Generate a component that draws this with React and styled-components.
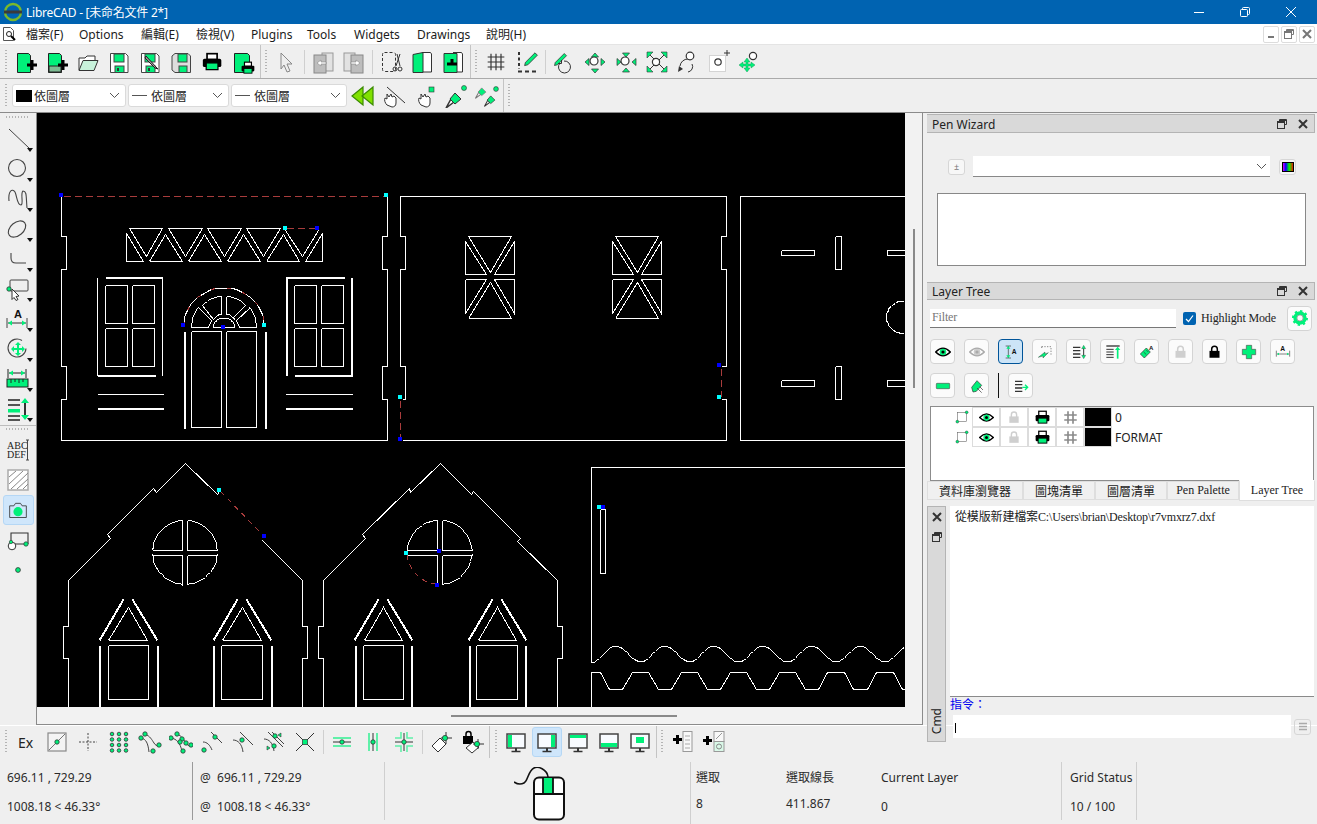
import React from 'react';
import styled, { createGlobalStyle } from 'styled-components';

const G = '#00f07a';
const INK = '#222';
const SANS = '"Noto Sans", "Noto Sans CJK TC", sans-serif';
const SERIF = '"Liberation Serif", "Noto Sans CJK TC", serif';

const Global = createGlobalStyle`
  html, body { margin: 0; padding: 0; background: #efefef; overflow: hidden; }
  * { box-sizing: border-box; }
  body { font-family: ${SANS}; font-size: 12px; color: ${INK}; }
`;

const Win = styled.div`
  width: 1317px;
  height: 824px;
  display: flex;
  flex-direction: column;
  background: #efefef;
  overflow: hidden;
`;

/* title + menu */
const TitleBar = styled.div`
  height: 24px;
  flex: none;
  background: #0063b1;
  color: #fff;
  display: flex;
  align-items: center;
  padding: 0 3px;
  font-size: 12px;
`;
const TitleText = styled.span`
  margin-left: 3px;
  letter-spacing: -0.25px;
`;
const Caption = styled.div`
  margin-left: auto;
  display: flex;
`;
const CaptionBtn = styled.div`
  width: 46px;
  height: 24px;
  display: flex;
  align-items: center;
  justify-content: center;
`;
const MenuBar = styled.div`
  height: 21px;
  flex: none;
  background: #fff;
  border-bottom: 1px solid #e4e4e4;
  display: flex;
  align-items: center;
  padding-left: 3px;
`;
const MenuItem = styled.div`
  width: ${p => p.$w}px;
  flex: none;
  font-size: 12px;
  white-space: nowrap;
  color: #1c1c1c;
`;
const MdiBtns = styled.div`
  margin-left: auto;
  margin-right: 2px;
  display: flex;
  gap: 2px;
`;
const MdiBtn = styled.div`
  width: 16px;
  height: 17px;
  border: 1px solid #dcdcdc;
  border-radius: 2px;
  display: flex;
  align-items: center;
  justify-content: center;
`;

/* toolbars */
const ToolRow = styled.div`
  height: 34px;
  flex: none;
  display: flex;
  border-bottom: 1px solid ${p => p.$line || '#aaa'};
`;
const Group = styled.div`
  display: flex;
  align-items: center;
  height: 100%;
  padding-left: ${p => p.$pl || 0}px;
  padding-right: ${p => p.$pr || 0}px;
  border-right: ${p => (p.$end ? '1px solid #c4c4c4' : 'none')};
`;
const EndLine = styled.div`
  width: ${p => p.$w}px;
  height: 100%;
  flex: none;
  border-right: 1px solid #c4c4c4;
  margin-right: ${p => p.$mr || 0}px;
`;
const Grip = styled.div`
  width: 9px;
  height: 24px;
  flex: none;
  background: repeating-linear-gradient(to bottom, #b4b4b4 0 1px, transparent 1px 3px) 4px 0 / 2px 100% no-repeat;
`;
const Btn = styled.div`
  width: 31px;
  height: 30px;
  flex: none;
  display: flex;
  align-items: center;
  justify-content: center;
  font-size: 14px;
  position: relative;
  ${p => p.$on && `
    &::before {
      content: '';
      position: absolute;
      inset: 0 0.5px;
      background: #cfe6fb;
      border: 1px solid #b5d7f5;
      border-radius: 3px;
    }
    svg { position: relative; }
  `}
`;
const Sep = styled.div`
  width: 6px;
  height: 24px;
  flex: none;
  background: linear-gradient(#cfcfcf, #cfcfcf) 2.5px 0 / 1px 100% no-repeat;
`;
const Combo = styled.div`
  width: ${p => p.$w}px;
  height: 23px;
  flex: none;
  margin-left: ${p => p.$ml || 0}px;
  margin-right: ${p => p.$mr || 0}px;
  background: #fff;
  border: 1px solid #dadada;
  border-radius: 3px;
  display: flex;
  align-items: center;
  padding: 0 5px 0 3px;
  font-size: 12px;
  svg { margin-left: auto; }
`;
const ColorChip = styled.i`
  width: 16px;
  height: 12px;
  flex: none;
  background: #000;
  margin-right: 2px;
`;
const LineChip = styled.i`
  width: 15px;
  height: 1px;
  flex: none;
  background: #555;
  margin-right: 4px;
`;

/* middle */
const Body = styled.div`
  flex: 1;
  display: flex;
  min-height: 0;
`;
const LeftCol = styled.div`
  width: 924px;
  flex: none;
  display: flex;
  flex-direction: column;
`;
const Workspace = styled.div`
  height: 612px;
  flex: none;
  display: flex;
`;
const SideBar = styled.div`
  width: 36px;
  flex: none;
  display: flex;
  flex-direction: column;
  align-items: center;
`;
const SideGrip = styled.div`
  width: 24px;
  height: 2px;
  flex: none;
  margin: ${p => p.$mt}px 0 ${p => p.$mb}px;
  background: repeating-linear-gradient(to right, #b4b4b4 0 1px, transparent 1px 3px);
`;
const SideBtn = styled.div`
  width: 31px;
  height: 30px;
  flex: none;
  display: flex;
  align-items: center;
  justify-content: center;
  position: relative;
  ${p => p.$on && `
    background: #cfe6fb;
    border: 1px solid #b5d7f5;
    border-radius: 3px;
  `}
  ${p => p.$drop && `
    &::after {
      content: '';
      position: absolute;
      right: 1px;
      bottom: 2px;
      border: 3px solid transparent;
      border-top: 4px solid #111;
      border-bottom: 0;
    }
  `}
`;
const SideRule = styled.div`
  width: 36px;
  height: 1px;
  flex: none;
  background: #bdbdbd;
  margin: 1px 0;
`;
const Frame = styled.div`
  width: 887px;
  height: 612px;
  flex: none;
  border: 1px solid #8b8b8b;
  border-top: 0;
  display: grid;
  grid-template-columns: 868px 17px;
  grid-template-rows: 594px 17px;
  background: #f2f2f2;
`;
const Canvas = styled.div`
  background: #000;
  overflow: hidden;
  svg { display: block; }
`;
const VScroll = styled.div`
  padding: 116px 0 0 8px;
  i { display: block; width: 2px; height: 159px; background: #8a8a8a; }
`;
const HScroll = styled.div`
  padding: 8px 0 0 414px;
  i { display: block; width: 226px; height: 2px; background: #8a8a8a; }
`;
const SnapBar = styled.div`
  height: 35px;
  flex: none;
  display: flex;
  align-items: center;
  border-top: 1px solid #fff;
  padding-bottom: 2px;
`;

/* right dock */
const Dock = styled.div`
  width: 393px;
  flex: none;
  padding: 1px 2px 0 3px;
  background: linear-gradient(#fff, #fff) 0 612px / 100% 1px no-repeat;
`;
const DockTitle = styled.div`
  height: ${p => p.$h || 19}px;
  background: #d9d9d9;
  border: 1px solid #b4b4b4;
  border-width: 1px 1px 1px 0;
  display: flex;
  align-items: center;
  padding: ${p => p.$pt || 0}px 6px 0 5px;
  font-size: 12px;
  color: #222;
  div { margin-left: auto; display: flex; gap: 11px; align-items: center; }
`;
const WizardBody = styled.div`
  height: 149px;
  padding: 23px 0 0 10px;
`;
const WizardRow = styled.div`
  display: flex;
  align-items: center;
  height: 21px;
  padding-left: 11px;
`;
const SmallBtn = styled.div`
  width: 17px;
  height: 16px;
  flex: none;
  background: #f7f7f7;
  border: 1px solid #d6d6d6;
  border-radius: 3px;
  display: flex;
  align-items: center;
  justify-content: center;
  color: #777;
  font-size: 9px;
`;
const WizardCombo = styled.div`
  width: 297px;
  height: 21px;
  margin: 0 9px 0 8px;
  background: #fff;
  border-bottom: 1px solid #888;
  display: flex;
  align-items: center;
  justify-content: flex-end;
  padding-right: 3px;
`;
const WizardList = styled.div`
  width: 369px;
  height: 73px;
  margin-top: 16px;
  background: #fff;
  border: 1px solid #888;
`;
const FilterRow = styled.div`
  height: 26px;
  margin: 5px 3px 0 3px;
  display: flex;
  align-items: center;
  font-family: ${SERIF};
  font-size: 12px;
  letter-spacing: -0.15px;
`;
const FilterInput = styled.div`
  width: 246px;
  height: 19px;
  background: #fff;
  border-bottom: 1px solid #777;
  padding: 1px 2px;
  color: #777;
`;
const Check = styled.div`
  width: 13px;
  height: 13px;
  margin: 0 5px 0 7px;
  background: #0063b1;
  border-radius: 2px;
  display: flex;
  align-items: center;
  justify-content: center;
`;
const RoundBtn = styled.div`
  width: ${p => p.$s || 25}px;
  height: ${p => p.$s || 25}px;
  flex: none;
  margin-left: ${p => (p.$push ? 'auto' : 0)};
  background: ${p => (p.$on ? '#cce4f7' : '#fbfbfb')};
  border: 1px solid ${p => (p.$on ? '#005499' : '#d4d4d4')};
  border-radius: 4px;
  display: flex;
  align-items: center;
  justify-content: center;
`;
const LayerBtns = styled.div`
  margin: 8px 0 0 3px;
  width: 385px;
  display: flex;
  flex-wrap: wrap;
  gap: 9px;
`;
const BtnRule = styled.div`
  width: 1px;
  height: 25px;
  background: #111;
`;
const LayerTable = styled.div`
  margin: 8px 0 0 3px;
  width: 384px;
  height: 75px;
  background: #fff;
  border: 1px solid #8c8c8c;
`;
const LayerRow = styled.div`
  height: 20px;
  display: flex;
  align-items: center;
  padding-left: 24px;
`;
const TreeSlot = styled.div`
  width: 17px;
  flex: none;
`;
const LayerCell = styled.div`
  width: 28px;
  height: 20px;
  flex: none;
  border: 1px solid #dcdcdc;
  background: ${p => (p.$black ? '#000' : '#fff')};
  display: flex;
  align-items: center;
  justify-content: center;
`;
const LayerName = styled.div`
  padding-left: 3px;
  font-size: 12px;
`;
const Tabs = styled.div`
  display: flex;
  height: 21px;
  margin-top: -1px;
  position: relative;
  font-family: ${SERIF};
  font-size: 12px;
`;
const Tab = styled.div`
  width: ${p => p.$w}px;
  height: ${p => (p.$on ? 21 : 19)}px;
  margin-top: ${p => (p.$on ? 0 : 1)}px;
  flex: none;
  display: flex;
  align-items: center;
  justify-content: center;
  background: ${p => (p.$on ? '#fff' : '#f0f0f0')};
  border: 1px solid #dedede;
  border-top-color: ${p => (p.$on ? '#fff' : '#dedede')};
`;
const CmdDock = styled.div`
  margin-top: 5px;
  height: 236px;
  display: flex;
`;
const CmdBar = styled.div`
  width: 19px;
  flex: none;
  background: #d9d9d9;
  border: 1px solid #b4b4b4;
  display: flex;
  flex-direction: column;
  align-items: center;
  padding: 5px 0 7px;
  gap: 10px;
`;
const CmdBarLabel = styled.div`
  margin-top: auto;
  writing-mode: vertical-rl;
  transform: rotate(180deg);
  font-size: 12px;
`;
const CmdMain = styled.div`
  flex: 1;
  margin-left: 4px;
  display: flex;
  flex-direction: column;
`;
const Output = styled.div`
  width: 364px;
  height: 191px;
  flex: none;
  background: #fff;
  border-bottom: 1px solid #8a8a8a;
  padding: 1px 5px;
  font-family: ${SERIF};
  font-size: 12px;
  letter-spacing: -0.15px;
`;
const CmdLabel = styled.div`
  height: 18px;
  flex: none;
  color: #0000f0;
  font-size: 12px;
  line-height: 15px;
`;
const CmdInputRow = styled.div`
  display: flex;
  align-items: center;
  padding-left: 3px;
`;
const CmdInput = styled.div`
  width: 338px;
  height: 23px;
  background: #fff;
  padding: 8px 0 0 2px;
  i { display: block; width: 1px; height: 10px; background: #000; }
`;
const CmdMenuBtn = styled(SmallBtn)`
  margin-left: 3px;
  background: transparent;
`;

/* status */
const Status = styled.div`
  display: flex;
  height: 64px;
  flex: none;
  width: 1317px;
`;
const Cell = styled.div`
  width: ${p => p.$w}px;
  height: 58px;
  margin-top: 2px;
  flex: none;
  padding: 7px 0 0 ${p => p.$pl || 7}px;
  border-right: 1px solid ${p => p.$line || '#cfcfcf'};
  display: flex;
  flex-direction: column;
  gap: 11px;
`;
const StatusLine = styled.div`
  height: 18px;
  line-height: 18px;
  font-size: 12px;
  white-space: pre;
  color: #2b2b2b;
`;
const SelCols = styled.div`
  width: 371px;
  height: 58px;
  margin-top: 2px;
  flex: none;
  display: flex;
  border-right: 1px solid #cfcfcf;
`;
const SelCol = styled.div`
  width: ${p => p.$w}px;
  flex: none;
  padding: 7px 0 0 ${p => p.$pl || 0}px;
  display: flex;
  flex-direction: column;
  gap: ${p => p.$gap}px;
`;
const MouseCell = styled.div`
  width: 306px;
  height: 62px;
  margin-top: 2px;
  flex: none;
  border-right: 1px solid #cfcfcf;
  display: flex;
  justify-content: center;
  padding: 5px 0 0 6px;
`;

/* ---- icons ---- */
const Svg = styled.svg`
  display: block;
  flex: none;
  fill: none;
  stroke: ${INK};
  stroke-width: 1;
`;
const I = ({ s = 24, children }) => <Svg width={s} height={s} viewBox="0 0 24 24">{children}</Svg>;
const Plus = ({ x = 18, y = 15, c = '#000' }) => (
  <path d={`M${x - 1.5} ${y - 5}h3v3.5h3.5v3H${x + 1.5}v3.5h-3v-3.5H${x - 5}v-3h3.5z`} fill={c} stroke="none" />
);
const Page = ({ x = 3, w = 13 }) => <path d={`M${x + .5} 3.5h${w - 2}l2 2v17h-${w}z`} fill={G} stroke={INK} />;
const Mag = ({ x = 10, y = 10, r = 4 }) => (
  <g>
    <circle cx={x} cy={y} r={r} fill="#fff" stroke="#333" strokeWidth="1.2" />
    <path d={`M${x + r - .5} ${y + r - .5}l5 5`} stroke="#111" strokeWidth="2.2" />
  </g>
);
const Dot = ({ x, y, r = 2.2 }) => <circle cx={x} cy={y} r={r} fill={G} stroke="#333" strokeWidth=".8" />;
const Floppy = () => (
  <g>
    <path d="M3.5 3.5h15l2.5 2.5v16.5H3.5z" fill="#fff" stroke="#444" />
    <rect x="7" y="4" width="10" height="8" fill={G} stroke="#444" />
    <rect x="8" y="16" width="9" height="6.5" fill={G} stroke="#444" />
    <rect x="10" y="18" width="2" height="3" fill="#333" stroke="none" />
  </g>
);
const PrinterShape = ({ x = 0, y = 0, k = 1 }) => (
  <g transform={`translate(${x} ${y}) scale(${k})`}>
    <rect x="6" y="2" width="12" height="7" fill="#fff" stroke="#000" strokeWidth="2" />
    <rect x="1" y="8" width="22" height="10" rx="2" fill="#000" stroke="none" />
    <rect x="5" y="13" width="14" height="8" fill={G} stroke="#000" strokeWidth="1.5" />
  </g>
);
const Pencil = ({ x = 0, y = 0, k = 1 }) => (
  <path transform={`translate(${x} ${y}) scale(${k})`} d="M3 18l12-12 3 3-12 12-4 1z" fill={G} stroke="#333" />
);
const Screen = ({ children }) => (
  <I>
    <rect x="3" y="4" width="18" height="14" fill="#f8fbff" stroke="#444" strokeWidth="1.5" />
    {children}
    <path d="M12 18v3" stroke="#333" strokeWidth="2" />
    <path d="M7.5 21.5h9" stroke="#333" strokeWidth="1.5" />
  </I>
);
const Eye = ({ s = 16, c = G, d = '#000' }) => (
  <I s={s}>
    <path d="M1 12q11-11 22 0q-11 11-22 0z" fill="#fff" stroke={d} strokeWidth="2.2" />
    <circle cx="12" cy="12" r="5" fill={c} stroke="none" />
    <circle cx="12" cy="12" r="2.4" fill={d} stroke="none" />
  </I>
);
const Lock = ({ s = 15, c = '#cfcfcf' }) => (
  <I s={s}>
    <path d="M7.5 12V8a4.5 4.5 0 0 1 9 0v4" stroke={c} strokeWidth="2.4" />
    <rect x="4" y="11" width="16" height="11" fill={c} stroke="none" />
  </I>
);
const Hash = ({ s = 16, c = '#8a8a8a', w = 2.6, lines = 'M8 2v20M16 2v20M2 8h20M2 16h20' }) => (
  <I s={s}>
    <path d={lines} stroke={c} strokeWidth={w} />
  </I>
);
const ListLines = () => <path d="M3 5h11M3 10h11M3 15h11M3 20h11" stroke="#333" strokeWidth="2" />;
const Small = ({ children }) => <I s={16}>{children}</I>;
const TreeMark = () => (
  <I s={14}>
    <rect x="4" y="4" width="16" height="16" stroke="#666" />
    <circle cx="20" cy="4" r="2.4" fill={G} stroke="#222" strokeWidth=".7" />
    <circle cx="4" cy="20" r="2.4" fill={G} stroke="#222" strokeWidth=".7" />
  </I>
);
const Glyph = styled.svg`
  display: block;
  flex: none;
  fill: none;
`;
const Float = ({ c = '#333' }) => (
  <Glyph width="10" height="10" viewBox="0 0 10 10" stroke={c}>
    <path d="M2.5 2.5v-2h7v5h-2" /><rect x=".5" y="2.5" width="7" height="7" /><path d="M.5 3.5h7M2.5 1.5h7" />
  </Glyph>
);
const Close = ({ c = '#333' }) => (
  <Glyph width="10" height="10" viewBox="0 0 10 10" stroke={c} strokeWidth="2">
    <path d="M1 1l8 8M9 1L1 9" />
  </Glyph>
);
const Chevron = () => (
  <Glyph width="11" height="7" viewBox="0 0 11 7" stroke="#555"><path d="M1 1l4.5 4.5L10 1" /></Glyph>
);

const row1a = [
  <I><Page /><Plus /></I>,
  <I><Page /><rect x="4" y="16" width="12" height="6" fill="#7dbb93" stroke={INK} /><Plus /></I>,
  <I>
    <path d="M3 20V8h6l2-2h8v4" fill="#fff" stroke="#333" />
    <path d="M3 20.5l4-10h15l-4 10z" fill="#c8f2db" stroke="#333" />
  </I>,
  <I><Floppy /></I>,
  <I><Floppy /><path d="M8 6l10 11 2 2-3-1L7 8z" fill="#999" stroke="#222" /></I>,
  <I>
    <path d="M6 3.5h13l2.5 2.5v16.5H6L3 20V6z" fill="#ddd" stroke="#444" />
    <rect x="9" y="4" width="9" height="8" fill={G} stroke="#444" />
    <rect x="10" y="16" width="8" height="6.5" fill={G} stroke="#444" />
  </I>,
  <I><PrinterShape x="2" y="2" k=".84" /></I>,
  <I>
    <Page w={15} />
    <PrinterShape x="10" y="11" k="0.58" />
  </I>,
];
const GreyPages = ({ flip }) => (
  <I>
    <g transform={flip ? 'matrix(-1 0 0 1 24 0)' : undefined}>
      <rect x="11" y="3" width="11" height="18" fill="#e2e2e2" stroke="#999" />
      <rect x="3" y="5" width="12" height="18" fill="#bdbdbd" stroke="#888" />
      <path d="M6 13l4-3v2h5v2h-5v2z" fill="#fff" stroke="#888" strokeWidth=".6" />
    </g>
  </I>
);
const zoomIcons = [
  <I>
    <Pencil x="1" y="-1" k=".75" />
    <path d="M12 11a6 6 0 1 1-4 2M9.5 10v3.5H6" stroke="#333" />
  </I>,
  <I>
    <path d="M12 3l3.5 4h-7zM12 23l-3.5-4h7zM2 12l4-3.5v7zM22 12l-4 3.5v-7z" fill={G} stroke="#333" strokeWidth=".7" />
    <Mag x="11" y="11" r="4" />
  </I>,
  <I>
    <path d="M12 7L8.5 3h7zM12 18l3.5 4h-7zM7 12l-4 3.5v-7zM18 12l4-3.5v7z" fill={G} stroke="#333" strokeWidth=".7" />
    <Mag x="11" y="11" r="4" />
  </I>,
  <I>
    <path d="M3 3l18 18M21 3L3 21" stroke="#333" />
    <Mag x="11" y="12" r="3.6" />
    <path d="M2 2h6l-6 6zM22 2v6l-6-6zM2 22v-6l6 6zM22 22h-6l6-6z" fill={G} stroke="#333" strokeWidth=".6" />
  </I>,
  <I>
    <path d="M12 9a8 8 0 0 0-8 7M12 22a5.5 5.5 0 0 0 4-8" stroke="#333" />
    <path d="M2 22l1-6 4 3z" fill="#333" stroke="none" />
    <Mag x="14" y="6" r="3.8" />
  </I>,
  <I>
    <rect x="2.5" y="5.5" width="16" height="16" fill="#fff" stroke="#d4d4d4" />
    <path d="M20 0v6M17 3h6" stroke="#333" />
    <Mag x="11" y="12" r="3.2" />
  </I>,
  <I>
    <path d="M9 8l3 4h-2v2h3v-2l4 3-4 3v-2h-3v2h2l-3 4-3-4h2v-2H5v2l-4-3 4-3v2h3v-2H6z" fill={G} stroke="#1aa05a" strokeWidth=".5" />
    <Mag x="15" y="6" r="3.6" />
  </I>,
];
const Hand = ({ x = 0, y = 0 }) => (
  <path transform={`translate(${x} ${y})`} d="M5 20c-2-2-3-5-2-7l2 1v-5l2 3 2-3 1 3 2-1 2 2v5c0 3-2 4-4 4z" fill="#fff" stroke="#333" />
);
const Brush = ({ x = 0, y = 0, k = 1, c = '#333' }) => (
  <g transform={`translate(${x} ${y}) scale(${k})`}>
    <path d="M2 22l5-9 3 3z" fill="#fff" stroke={c} strokeWidth="1.5" />
    <path d="M6 13l5-6 6 6-6 5z" fill={G} stroke={c} />
  </g>
);

const sideIcons = [
  <I><path d="M3 2l20 19" stroke="#444" /></I>,
  <I><circle cx="11" cy="11" r="8.5" stroke="#444" strokeWidth="1.1" /></I>,
  <I><path d="M3 14C2 4 6 1 9 5c2 4 2 13 6 13 3-1-1-12 2-14 4 0 3 6 4 17" stroke="#444" strokeWidth="1.1" /></I>,
  <I><ellipse cx="11" cy="12" rx="10" ry="6.5" transform="rotate(-40 11 12)" stroke="#444" strokeWidth="1.1" /></I>,
  <I><path d="M5 6v5c0 4 2 5 5 5h10" stroke="#444" strokeWidth="1.1" /></I>,
  <I>
    <rect x="4" y="3" width="18" height="11" rx="1" stroke="#444" />
    <path d="M6 12l7 7-3 .5 2 3-2 1-2-3-2 2z" fill="#fff" stroke="#333" />
    <Dot x="3" y="12" />
  </I>,
  <I>
    <text x="8" y="11" fontFamily="Liberation Sans" fontSize="11" fontWeight="700" fill="#111" stroke="none">A</text>
    <path d="M1 11v10M21 11v10" stroke="#444" />
    <path d="M2 16h18" stroke="#333" />
    <path d="M2 16l4-2.5v5zM20 16l-4-2.5v5z" fill={G} stroke="none" />
  </I>,
  <I>
    <path d="M16 3.5a9 9 0 1 0 4 8" stroke="#444" strokeWidth="1.1" />
    <path d="M12 5l3 3h-2v3h3V9l3 3-3 3v-2h-3v3h2l-3 3-3-3h2v-3H8v2l-3-3 3-3v2h3V8H9z" fill={G} stroke="none" />
  </I>,
  <I>
    <path d="M2 2v9M20 2v9M3 6h16" stroke="#222" />
    <path d="M3 6l4-2.5v5zM19 6l-4-2.5v5z" fill={G} stroke="none" />
    <rect x="1" y="12" width="21" height="8" fill={G} stroke="#222" />
    <path d="M5 12v4M9 12v3M13 12v4M17 12v3" stroke="#222" />
  </I>,
  <I>
    <path d="M2 3h12M2 8h12M2 19h12M2 23h12" stroke="#222" strokeWidth="1.6" />
    <rect x="2" y="12" width="12" height="3.5" fill={G} stroke="none" />
    <path d="M19 4v16" stroke="#333" strokeWidth="2" />
    <path d="M19 1l4 5h-8zM19 23l-4-5h8z" fill={G} stroke="none" />
  </I>,
];
const sideIcons2 = [
  <I>
    <text x="1" y="11" fontFamily="Liberation Serif" fontSize="10" fill="#222" stroke="none">ABC</text>
    <text x="1" y="20" fontFamily="Liberation Serif" fontSize="10" fill="#222" stroke="none">DEF</text>
    <path d="M20 2h3M21.5 2v20M20 22h3" stroke="#444" />
  </I>,
  <I>
    <rect x="2" y="2" width="20" height="20" fill="#fff" stroke="#aaa" strokeWidth="1.5" />
    <path d="M3 9l7-6M3 16L17 3M5 21L22 5M11 21L22 11M17 21l5-5" stroke="#888" />
  </I>,
  <I s={20}>
    <path d="M2 7h5l2-3h6l2 3h5v14H2z" stroke="#333" />
    <circle cx="12" cy="14" r="5.5" fill={G} stroke="none" />
  </I>,
  <I>
    <path d="M5 14V5h17v11" stroke="#333" strokeWidth="1.1" />
    <path d="M6 16h13" stroke="#333" />
    <circle cx="6" cy="18" r="3.8" fill="#fff" stroke="#333" />
    <circle cx="20" cy="16" r="2.2" fill={G} stroke="#333" strokeWidth=".7" />
    <circle cx="5" cy="14" r="1.7" fill={G} stroke="#333" strokeWidth=".6" />
  </I>,
  <I><Dot x="12" y="12" r="2.4" /></I>,
];

const snapA = [
  'Ex',
  <I>
    <rect x="3" y="3" width="18" height="18" fill="#f4f4f4" stroke="#888" strokeWidth="1.2" />
    <path d="M4 20L20 4" stroke="#777" />
    <Dot x="12" y="12" />
  </I>,
  <I><path d="M3 12h18M12 3v18" stroke="#444" strokeDasharray="2 1.5" /></I>,
  <I>
    {[5, 12, 19].flatMap(x => [4, 9.5, 15, 20.5].map(y => <Dot key={`${x}-${y}`} x={x} y={y} r="1.8" />))}
  </I>,
  <I>
    <path d="M7 4c5 2 7 6 9 9 1 2 3 3 5 3M3 8c5 1 7 5 8 14" stroke="#444" />
    <Dot x="7" y="4" /><Dot x="21" y="15" /><Dot x="3" y="8" /><Dot x="15" y="21" />
  </I>,
  <I>
    <path d="M8 4c5 2 7 6 9 9 1 2 3 3 5 3M2 8c6 1 9 5 11 13" stroke="#444" />
    <Dot x="8" y="4" /><Dot x="22" y="15" /><Dot x="2" y="8" /><Dot x="14" y="21" /><Dot x="13" y="9" /><Dot x="17" y="13" /><Dot x="11" y="12" />
  </I>,
  <I>
    <path d="M11 2l11 11M3 12c4 0 7 3 9 8" stroke="#444" />
    <Dot x="15" y="7" /><Dot x="4" y="20" />
  </I>,
  <I>
    <path d="M9 2l13 13M2 10c5 0 9 4 10 12" stroke="#444" />
    <Dot x="11" y="10" />
  </I>,
  <I>
    <path d="M6 2l15 15M10 2l12 12M2 9c5 0 9 4 10 12" stroke="#444" />
    <Dot x="13" y="6" /><Dot x="12" y="16" />
    <path d="M19 3l-3 2 3 2zM5 16l3 2-3 2z" fill={G} stroke="#333" strokeWidth=".6" />
  </I>,
  <I>
    <path d="M3 3l18 18M21 3L3 21" stroke="#333" />
    <rect x="9.5" y="9.5" width="5" height="5" fill={G} stroke="#333" strokeWidth=".7" />
  </I>,
];
const snapB = [
  <I>
    <path d="M3 8h18M3 16h18" stroke={G} strokeWidth="2" opacity=".6" />
    <path d="M3 12h18" stroke="#333" />
    <Dot x="12" y="12" />
  </I>,
  <I>
    <path d="M8 3v18M16 3v18" stroke={G} strokeWidth="2" opacity=".6" />
    <path d="M12 3v18" stroke="#333" />
    <Dot x="12" y="12" />
  </I>,
  <I>
    <path d="M3 8h6V2M15 2v6h6M3 16h6v6M21 16h-6v6" stroke={G} strokeWidth="1.6" opacity=".6" />
    <path d="M3 12h18M12 3v18" stroke="#333" />
    <Dot x="12" y="12" />
  </I>,
];
const snapC = [
  <I>
    <path d="M3 16l8-8 6 6-8 8z" fill="#fff" stroke="#333" />
    <path d="M12 8h11M17 2v12" stroke="#333" />
    <Dot x="16" y="8" r="2.6" />
  </I>,
  <I>
    <path d="M6 6V4a2.5 2.5 0 0 1 5 0v2" stroke="#000" strokeWidth="1.5" />
    <rect x="3" y="6" width="10" height="8" fill="#000" stroke="none" />
    <path d="M6 18l7-6 6 5-7 6z" fill="#fff" stroke="#333" />
    <path d="M13 14h11M18 9v10" stroke="#333" />
    <Dot x="17" y="14" r="2.6" />
  </I>,
];
const screens = [
  <Screen><rect x="4" y="5" width="4" height="12" fill={G} stroke="none" /></Screen>,
  <Screen><rect x="16" y="5" width="4" height="12" fill={G} stroke="none" /></Screen>,
  <Screen><rect x="4" y="5" width="16" height="3" fill={G} stroke="none" /></Screen>,
  <Screen><rect x="4" y="13" width="16" height="4" fill={G} stroke="none" /></Screen>,
  <Screen><rect x="8" y="7" width="8" height="6" fill={G} stroke="none" /></Screen>,
];

const layerIcons = [
  { el: <Eye /> },
  { el: <Eye c="#ccc" d="#aaa" /> },
  { on: 1, el: (
    <Small>
      <path d="M4 3h8M4 21h8M8 3v18" stroke="#333" />
      <path d="M8 3l-3 4h6zM8 21l-3-4h6z" fill={G} stroke="none" />
      <text x="13" y="15" fontFamily="Liberation Sans" fontSize="10" fontWeight="700" fill="#111" stroke="none">A</text>
    </Small>
  ) },
  { el: (
    <Small>
      <path d="M7 4h14v12M7 4v3" stroke="#555" strokeDasharray="2 2" />
      <path d="M2 20l10-8v3l5-2-8 8v-3z" fill={G} stroke="#333" strokeWidth=".6" />
    </Small>
  ) },
  { el: (
    <Small>
      <ListLines />
      <path d="M19 6v12" stroke="#333" strokeWidth="1.5" />
      <path d="M19 2l3 5h-6zM19 22l-3-5h6z" fill={G} stroke="#333" strokeWidth=".5" />
    </Small>
  ) },
  { el: (
    <Small>
      <path d="M2 3h20" stroke="#333" strokeWidth="2" />
      <path d="M2 8h11M2 12h11M2 16h11M2 20h11" stroke="#333" strokeWidth="1.5" />
      <path d="M19 9v13" stroke={G} strokeWidth="2.5" />
      <path d="M19 4l4 5h-8z" fill={G} stroke="none" />
    </Small>
  ) },
  { el: (
    <Small>
      <path d="M2 15l9-9 6 6-9 9z" fill={G} stroke="#333" />
      <path d="M7 12l4 4M11 9l3 3" stroke="#333" />
      <text x="15" y="9" fontFamily="Liberation Sans" fontSize="9" fontWeight="700" fill="#111" stroke="none">A</text>
    </Small>
  ) },
  { el: <Lock /> },
  { el: <Lock c="#000" /> },
  { el: <Small><path d="M8 2h8v6h6v8h-6v6H8v-6H2V8h6z" fill={G} stroke="#555" /></Small> },
  { el: (
    <Small>
      <text x="8" y="11" fontFamily="Liberation Sans" fontSize="10" fontWeight="700" fill="#111" stroke="none">A</text>
      <path d="M2 10v9M22 10v9M3 15h18" stroke="#444" />
      <path d="M3 15l3-2v4zM21 15l-3-2v4z" fill={G} stroke="none" />
    </Small>
  ) },
];

/* ---- drawing ---- */
const mk = (ox, oy, sx, sy) => str => str.trim().split(/\s+/).map(p => {
  const [x, y] = p.split(',').map(Number);
  return `${Math.floor(ox + x / sx) + 0.5},${Math.floor(oy + y / sy) + 0.5}`;
}).join(' ');
const arc = (cx, cy, rx, ry, a0, a1) => {
  const pts = [];
  const n = Math.max(4, Math.ceil(Math.abs(a1 - a0) / 6));
  for (let i = 0; i <= n; i++) {
    const a = ((a0 + ((a1 - a0) * i) / n) * Math.PI) / 180;
    pts.push(`${(cx + rx * Math.cos(a)).toFixed(1)},${(cy + ry * Math.sin(a)).toFixed(1)}`);
  }
  return pts.join(' ');
};
const m8 = mk(40, 180, 3, 3);
const m9 = mk(40, 450, 2.904, 3);
const m10 = mk(390, 180, 2.958, 3);
const m11 = mk(580, 450, 3, 3);

const rect = (a, b, c, d) => `${a},${b} ${c},${b} ${c},${d} ${a},${d} ${a},${b}`;

const panel1Thin = [
  '1042,49 1042,168 1027,168 1027,268 1042,268 1042,559 1027,559 1027,658 1042,658 1042,781 64,781 64,658 80,658 80,559 64,559 64,268 80,268 80,168 64,168 64,49',
  '268,145 368,145 319,230 268,145', '385,145 488,145 436,230 385,145', '502,145 605,145 552,230 502,145',
  '619,145 722,145 670,230 619,145', '736,150 787,230 834,150',
  '328,244 427,244 377,162 328,244', '445,244 545,244 493,162 445,244', '562,244 661,244 609,162 562,244', '679,244 778,244 729,162 679,244',
  '259,160 259,244 310,244 259,160', '848,160 848,244 796,244 848,160',
  '172,291 172,587', '368,291 368,587',
  rect(196, 316, 263, 431), rect(277, 316, 344, 431), rect(196, 445, 263, 560), rect(277, 445, 344, 560),
  rect(763, 316, 830, 431), rect(844, 316, 911, 431), rect(763, 445, 830, 560), rect(844, 445, 911, 560),
  '171,643 369,643', '735,643 936,643',
  rect(454, 454, 545, 743), rect(559, 454, 650, 743),
  arc(552, 437, 120, 113, 180, 360),
  `521,442 ${arc(552, 442, 32, 28, 180, 360)} 521,442`,
  `${arc(552, 442, 93, 93, 225, 266)} 545,403 ${arc(552, 442, 40, 40, 260, 218)} 487,376`,
  `${arc(552, 442, 93, 93, 274, 315)} 580,411 ${arc(552, 442, 40, 40, 322, 280)} 559,349`,
  `454,442 505,442 514,420 478,385 ${arc(552, 442, 97, 97, 218, 180)}`,
  `650,442 598,442 590,420 627,385 ${arc(552, 442, 97, 97, 322, 360)}`,
];
const panel1Thick = [
  '195,291 368,291', '172,585 345,585', '171,684 369,684',
  '735,291 912,291', '738,291 738,587', '933,291 933,587', '762,585 936,585', '735,684 936,684',
  '432,454 432,744', '675,454 675,744',
];
const panel1Red = ['70,49 1032,49', '740,145 830,145'];

const win = dx => [
  `${232 + dx},169 ${360 + dx},169 ${297 + dx},277 ${232 + dx},169`,
  `${223 + dx},184 ${223 + dx},284 ${284 + dx},284 ${223 + dx},184`,
  `${369 + dx},184 ${369 + dx},284 ${308 + dx},284 ${369 + dx},184`,
  `${223 + dx},298 ${284 + dx},298 ${223 + dx},400 ${223 + dx},298`,
  `${369 + dx},298 ${308 + dx},298 ${369 + dx},400 ${369 + dx},298`,
  `${232 + dx},415 ${360 + dx},415 ${297 + dx},308 ${232 + dx},415`,
];
const panel2 = [
  '36,658 46,658 46,559 31,559 31,268 46,268 46,168 31,168 31,49 996,49 996,168 980,168 980,268 996,268 996,559 982,559',
  '982,658 996,658 996,781 36,781',
  ...win(0), ...win(435),
  '1545,49 1036,49 1036,781 1545,781',
  rect(1158, 211, 1256, 227), rect(1318, 169, 1336, 268), '1545,211 1471,211 1471,227 1545,227',
  rect(1158, 601, 1256, 620), rect(1318, 559, 1336, 659), '1545,601 1471,601 1471,620 1545,620',
  arc(1520, 412, 51, 49, 90, 270),
];

const dormer = (t, a, b) => [
  `${t + 0},571 ${t + 56},473 ${t + 112},571 ${t + 0},571`,
  rect(a, 587, b, 748),
];
const dormerThick = (bl, br, l0, l1, r0, r1) => [
  `${bl},587 ${bl},770`, `${br},587 ${br},770`,
  `${l0},570 ${l1},448`, `${r0},448 ${r1},572`,
];
const quarter = (cx, xl) => [
  `${xl},${300} ${cx - 7},300 ${cx - 7},211 ${arc(cx, 307, 94, 96, 266, 184)}`,
  `${cx + 7},211 ${cx + 7},300 ${cx + 94},300 ${arc(cx, 307, 94, 96, 356, 274)}`,
  `${cx + 7},316 ${cx + 94},316 ${arc(cx, 307, 94, 96, 4, 86)} ${cx + 7},316`,
];
const house = [
  '82,770 82,625 68,625 68,530 82,530 82,390 205,265 196,253 330,115 338,128 422,40 515,132 522,124',
  '647,272 762,390 762,530 777,530 777,625 762,625 762,770',
  '824,770 824,625 808,625 808,530 824,530 824,390 946,265 937,253 1072,115 1076,128 1162,40 1252,132 1260,124 1396,265 1387,275 1502,390 1502,530 1518,530 1518,625 1502,625 1502,770',
  ...quarter(421, 327),
  `327,316 414,316 414,405 ${arc(421, 307, 94, 96, 94, 176)}`,
  ...quarter(1161, 1067),
  '1067,316 1154,316 1154,405',
  ...dormer(200, 198, 316), ...dormer(531, 527, 647), ...dormer(941, 939, 1056), ...dormer(1272, 1267, 1387),
];
const houseThick = [
  ...dormerThick(174, 340, 172, 243, 268, 342),
  ...dormerThick(505, 671, 503, 574, 600, 673),
  ...dormerThick(915, 1080, 913, 984, 1009, 1082),
  ...dormerThick(1246, 1411, 1244, 1315, 1340, 1413),
];
const waveX = [];
for (let x = 50; x <= 980; x += 7) {
  waveX.push(`${x},${(612 - 24 * Math.cos(((x - 108) * 2 * Math.PI) / 146.6)).toFixed(1)}`);
}
const panel4 = [
  `980,52 34,52 34,637 42,636 ${waveX.join(' ')}`,
  rect(61, 177, 77, 371),
  '34,770 34,667 62,667 88,718 128,718 156,667 206,667 234,718 275,718 303,667 353,667 381,718 422,718 450,667 500,667 528,718 569,718 597,667 647,667 675,718 716,718 741,667 794,667 820,718 863,718 888,667 940,667 966,718 980,718',
];
const nodes = [
  [m8, 63, 45, 'b'], [m8, 1038, 45, 'c'], [m8, 735, 144, 'c'], [m8, 833, 144, 'b'], [m8, 429, 437, 'b'], [m8, 549, 443, 'b'], [m8, 672, 437, 'c'],
  [m10, 30, 653, 'c'], [m10, 30, 777, 'b'], [m10, 976, 557, 'b'], [m10, 976, 653, 'c'],
  [m9, 520, 120, 'c'], [m9, 653, 258, 'b'], [m9, 1159, 305, 'b'], [m9, 1065, 311, 'c'], [m9, 1153, 405, 'b'],
  [m11, 57, 171, 'c'], [m11, 71, 171, 'b'],
];
const Lines = ({ m, list, w = 1 }) => list.map((p, i) => <polyline key={i} points={m(p)} strokeWidth={w} />);

const Drawing = () => (
  <svg width="868" height="594" viewBox="37 113 868 594" fill="none" stroke="#fff" shapeRendering="crispEdges">
    <Lines m={m8} list={panel1Thin} />
    <Lines m={m8} list={panel1Thick} w={2} />
    <g stroke="#a83c3c" strokeDasharray="7 4">
      <Lines m={m8} list={panel1Red} />
    </g>
    <g stroke="#a83c3c" strokeDasharray="4 12">
      <polyline points={m8(arc(552, 437, 120, 113, 180, 360))} />
    </g>
    <Lines m={m10} list={panel2} />
    <g stroke="#a83c3c" strokeDasharray="7 4">
      <polyline points={m10('980,565 980,650')} />
      <polyline points={m10('31,660 31,770')} />
    </g>
    <Lines m={m9} list={house} />
    <Lines m={m9} list={houseThick} w={2} />
    <g stroke="#a83c3c" strokeDasharray="5 5">
      <polyline points={m9('525,125 640,248')} />
      <polyline points={m9(arc(1161, 307, 94, 96, 176, 94))} />
    </g>
    <Lines m={m11} list={panel4} />
    {nodes.map(([m, x, y, k], i) => {
      const [px, py] = m(`${x},${y}`).split(',').map(Number);
      return <rect key={i} x={px - 2.5} y={py - 2.5} width="4" height="4" fill={k === 'b' ? '#0000ff' : '#00ffff'} stroke="none" />;
    })}
  </svg>
);

const Mouse = () => (
  <Glyph width="53" height="55" viewBox="0 0 53 55" stroke="#111" strokeWidth="1.6">
    <path d="M34 10C33 2 24-1 20 1 14 4 14 14 10 16 6 18 3 17 0 15" />
    <rect x="20" y="10.5" width="30" height="42" rx="5" fill="#fff" strokeWidth="2" />
    <rect x="29" y="11" width="10" height="16" fill={G} stroke="none" />
    <path d="M29 11v16M39 11v16M20 27h30" strokeWidth="1.8" />
  </Glyph>
);

const Row = ({ items }) => items.map((el, i) => <Btn key={i}>{el}</Btn>);

export default function App() {
  return (
    <Win>
      <Global />
      <TitleBar>
        <Glyph width="20" height="20" viewBox="0 0 20 20">
          <circle cx="10" cy="10" r="8" stroke="#79b82c" strokeWidth="2.4" />
          <rect x="1" y="8.5" width="18" height="3" fill="#3a3a3a" />
        </Glyph>
        <TitleText>LibreCAD - [未命名文件 2*]</TitleText>
        <Caption>
          <CaptionBtn>
            <Glyph width="10" height="10" viewBox="0 0 10 10" stroke="#fff"><path d="M0 5.5h10" /></Glyph>
          </CaptionBtn>
          <CaptionBtn>
            <Glyph width="10" height="10" viewBox="0 0 10 10" stroke="#fff"><rect x=".5" y="2.5" width="7" height="7" rx="1" /><path d="M2.5 2.5v-1a1 1 0 0 1 1-1h5a1 1 0 0 1 1 1v5a1 1 0 0 1-1 1h-1" /></Glyph>
          </CaptionBtn>
          <CaptionBtn>
            <Glyph width="10" height="10" viewBox="0 0 10 10" stroke="#fff"><path d="M0 0l10 10M10 0L0 10" /></Glyph>
          </CaptionBtn>
        </Caption>
      </TitleBar>
      <MenuBar>
        <MenuItem $w={23}>
          <Glyph width="13" height="14" viewBox="0 0 13 14" stroke="#555">
            <path d="M.5.5h7l3 3v10H.5z" fill="#fff" />
            <circle cx="6" cy="7" r="2.5" stroke="#222" />
            <path d="M8 9l4 4" stroke="#000" strokeWidth="2" />
          </Glyph>
        </MenuItem>
        <MenuItem $w={53}>檔案(F)</MenuItem>
        <MenuItem $w={62}>Options</MenuItem>
        <MenuItem $w={55}>編輯(E)</MenuItem>
        <MenuItem $w={55}>檢視(V)</MenuItem>
        <MenuItem $w={56}>Plugins</MenuItem>
        <MenuItem $w={47}>Tools</MenuItem>
        <MenuItem $w={63}>Widgets</MenuItem>
        <MenuItem $w={69}>Drawings</MenuItem>
        <MenuItem $w={50}>說明(H)</MenuItem>
        <MdiBtns>
          <MdiBtn><Glyph width="10" height="10" viewBox="0 0 10 10" stroke="#777" strokeWidth="2"><path d="M2 8h6" /></Glyph></MdiBtn>
          <MdiBtn><Float c="#777" /></MdiBtn>
          <MdiBtn><Close c="#777" /></MdiBtn>
        </MdiBtns>
      </MenuBar>
      <ToolRow>
        <Group $pl={1} $pr={2} $end><Grip /><Row items={row1a} /></Group>
        <Group $pr={2} $end>
          <Grip />
          <Btn><I><path d="M7 3l11 11h-5l3 7-3 1-3-7-3 4z" fill="#eee" stroke="#888" /></I></Btn>
          <Sep />
          <Btn><GreyPages /></Btn>
          <Btn><GreyPages flip /></Btn>
          <Sep />
          <Btn>
            <I>
              <rect x="3.5" y="2.5" width="13" height="19" rx="2" stroke="#333" strokeDasharray="3 2" />
              <path d="M18 4l3 12M21 4l-4 12" stroke="#333" />
              <circle cx="16" cy="19" r="2" stroke="#333" /><circle cx="21" cy="19" r="2" stroke="#333" />
            </I>
          </Btn>
          <Btn>
            <I>
              <path d="M12 2.5h8.5l1 1.5v18h-9.5" fill="#fff" stroke="#333" />
              <path d="M3 4.5L13 2.5v20H3z" fill={G} stroke="#333" />
            </I>
          </Btn>
          <Btn>
            <I>
              <path d="M12 2.5h8.5l1 1.5v18h-9.5" fill="#fff" stroke="#333" />
              <path d="M3 3.5h13v19H3z" fill={G} stroke="#333" />
              <Plus x="11" y="14" />
            </I>
          </Btn>
        </Group>
        <Group>
          <Grip />
          <Btn><Hash s={20} c="#333" w={1.4} lines="M6 2v20M12 2v20M18 2v20M2 6h20M2 12h20M2 18h20" /></Btn>
          <Btn>
            <I>
              <path d="M4 2v17" stroke="#333" strokeWidth="2" strokeDasharray="3 2.5" />
              <path d="M3 21.5h19" stroke="#333" strokeWidth="2" strokeDasharray="4 3" />
              <Pencil x="8" y="-2" k=".8" />
            </I>
          </Btn>
          <Sep />
          <Row items={zoomIcons} />
        </Group>
      </ToolRow>
      <ToolRow $line="#8b8b8b">
        <Group $pl={1} $pr={1} $end>
          <Grip />
          <Combo $w={114} $ml={2} $mr={2}><ColorChip />依圖層<Chevron /></Combo>
          <Combo $w={101} $mr={2}><LineChip />依圖層<Chevron /></Combo>
          <Combo $w={116}><LineChip />依圖層<Chevron /></Combo>
          <Btn>
            <I>
              <path d="M12 3L1 12l11 9zM22 3L11 12l11 9z" fill="#80e000" stroke="#3a8a00" strokeWidth="1.2" />
            </I>
          </Btn>
          <Btn><I><Hand y="1" /><path d="M5 3l18 16" stroke="#333" /></I></Btn>
          <Btn><I><Hand x="3" y="1" /><rect x="16" y="3" width="5" height="5" fill={G} stroke="#333" strokeWidth=".6" /></I></Btn>
          <Btn><I><Brush x="0" y="2" /><circle cx="20" cy="4" r="2.5" fill={G} stroke="#333" strokeWidth=".6" /></I></Btn>
          <Btn><I><Brush x="-1" y="-1" k=".7" c="#777" /><Brush x="8" y="7" k=".7" /><circle cx="21" cy="5" r="2.4" fill={G} stroke="#333" strokeWidth=".6" /></I></Btn>
        </Group>
        <Group><Grip /></Group>
      </ToolRow>
      <Body>
        <LeftCol>
          <Workspace>
            <SideBar>
              <SideGrip $mt={3} $mb={6} />
              {sideIcons.map((el, i) => <SideBtn key={i} $drop>{el}</SideBtn>)}
              <SideRule />
              <SideGrip $mt={1} $mb={5} />
              <SideBtn>{sideIcons2[0]}</SideBtn>
              <SideBtn>{sideIcons2[1]}</SideBtn>
              <SideBtn $on>{sideIcons2[2]}</SideBtn>
              <SideBtn>{sideIcons2[3]}</SideBtn>
              <SideBtn>{sideIcons2[4]}</SideBtn>
            </SideBar>
            <Frame>
              <Canvas><Drawing /></Canvas>
              <VScroll><i /></VScroll>
              <HScroll><i /></HScroll>
              <div />
            </Frame>
          </Workspace>
          <SnapBar>
            <Group $pl={1}>
              <Grip />
              <Row items={snapA} />
              <Sep />
              <Row items={snapB} />
              <Sep />
              <Row items={snapC} />
            </Group>
            <EndLine $w={3} $mr={1} />
            <Group>
              <Grip />
              <Btn>{screens[0]}</Btn>
              <Btn $on>{screens[1]}</Btn>
              <Btn>{screens[2]}</Btn>
              <Btn>{screens[3]}</Btn>
              <Btn>{screens[4]}</Btn>
            </Group>
            <EndLine $w={2} />
            <Group>
              <Grip />
              <Btn>
                <I>
                  <path d="M3 8h3V5h3v3h3v3H9v3H6v-3H3z" fill="#000" stroke="none" />
                  <rect x="13" y="1.5" width="9" height="20" fill="#f8f8f8" stroke="#999" />
                  <path d="M15 6h5M15 10h5M15 14h5M15 18h5" stroke="#aaa" />
                </I>
              </Btn>
              <Btn>
                <I>
                  <path d="M2 9h3V6h3v3h3v3H8v3H5v-3H2z" fill="#000" stroke="none" />
                  <rect x="13" y="1.5" width="10" height="10" fill="#f8f8f8" stroke="#999" />
                  <rect x="13" y="11.5" width="10" height="10" fill="#d9f8e8" stroke="#999" />
                  <path d="M15 9l6-6" stroke="#999" />
                  <circle cx="18" cy="16.5" r="2.5" stroke="#888" />
                </I>
              </Btn>
            </Group>
          </SnapBar>
        </LeftCol>
        <Dock>
          <DockTitle $pt={1}>Pen Wizard<div><Float /><Close /></div></DockTitle>
          <WizardBody>
            <WizardRow>
              <SmallBtn>±</SmallBtn>
              <WizardCombo><Chevron /></WizardCombo>
              <SmallBtn>
                <Glyph width="12" height="10" viewBox="0 0 12 10">
                  <defs>
                    <linearGradient id="hue" x1="0" x2="1" y1="0" y2="0">
                      <stop offset="0" stopColor="#f0f" /><stop offset=".3" stopColor="#00f" /><stop offset=".6" stopColor="#0f0" /><stop offset="1" stopColor="#f00" />
                    </linearGradient>
                  </defs>
                  <rect x=".5" y=".5" width="11" height="9" fill="url(#hue)" stroke="#000" />
                </Glyph>
              </SmallBtn>
            </WizardRow>
            <WizardList />
          </WizardBody>
          <DockTitle $h={18}>Layer Tree<div><Float /><Close /></div></DockTitle>
          <FilterRow>
            <FilterInput>Filter</FilterInput>
            <Check>
              <Glyph width="9" height="9" viewBox="0 0 9 9" stroke="#fff" strokeWidth="1.2"><path d="M1 5l2.5 2.5L8 1.5" /></Glyph>
            </Check>
            Highlight Mode
            <RoundBtn $s={25} $push>
              <Glyph width="16" height="16" viewBox="0 0 24 24">
                <circle cx="12" cy="12" r="7.5" stroke={G} strokeWidth="5" />
                <circle cx="12" cy="12" r="10.5" stroke={G} strokeWidth="3" strokeDasharray="3.5 4.7" />
                <circle cx="12" cy="12" r="4.6" stroke="#333" strokeWidth=".6" />
              </Glyph>
            </RoundBtn>
          </FilterRow>
          <LayerBtns>
            {layerIcons.map((b, i) => <RoundBtn key={i} $on={b.on}>{b.el}</RoundBtn>)}
            <RoundBtn><Small><rect x="2" y="8" width="20" height="8" rx="1" fill={G} stroke="#555" /></Small></RoundBtn>
            <RoundBtn>
              <Small>
                <path d="M4 14L12 4l7 7-8 9-5 1z" fill={G} stroke="#333" />
                <path d="M12 15l7 7M16 13l5 5" stroke="#333" />
              </Small>
            </RoundBtn>
            <BtnRule />
            <RoundBtn>
              <Small>
                <ListLines />
                <path d="M14 14h7M18 10l4 4-4 4" stroke={G} strokeWidth="2" />
              </Small>
            </RoundBtn>
          </LayerBtns>
          <LayerTable>
            {['0', 'FORMAT'].map(name => (
              <LayerRow key={name}>
                <TreeSlot><TreeMark /></TreeSlot>
                <LayerCell><Eye s={15} /></LayerCell>
                <LayerCell><Lock s={14} /></LayerCell>
                <LayerCell><I s={15}><PrinterShape /></I></LayerCell>
                <LayerCell><Hash s={15} /></LayerCell>
                <LayerCell $black />
                <LayerName>{name}</LayerName>
              </LayerRow>
            ))}
          </LayerTable>
          <Tabs>
            <Tab $w={96}>資料庫瀏覽器</Tab>
            <Tab $w={72}>圖塊清單</Tab>
            <Tab $w={72}>圖層清單</Tab>
            <Tab $w={72}>Pen Palette</Tab>
            <Tab $w={76} $on>Layer Tree</Tab>
          </Tabs>
          <CmdDock>
            <CmdBar>
              <Close />
              <Float />
              <CmdBarLabel>Cmd</CmdBarLabel>
            </CmdBar>
            <CmdMain>
              <Output>從模版新建檔案C:\Users\brian\Desktop\r7vmxrz7.dxf</Output>
              <CmdLabel>指令：</CmdLabel>
              <CmdInputRow>
                <CmdInput><i /></CmdInput>
                <CmdMenuBtn>
                  <Glyph width="10" height="9" viewBox="0 0 10 9" stroke="#aaa" strokeWidth="1.4"><path d="M1 1.5h8M1 4.5h8M1 7.5h8" /></Glyph>
                </CmdMenuBtn>
              </CmdInputRow>
            </CmdMain>
          </CmdDock>
        </Dock>
      </Body>
      <Status>
        <Cell $w={193} $line="#9a9a9a">
          <StatusLine>696.11 , 729.29</StatusLine>
          <StatusLine>1008.18 &lt; 46.33°</StatusLine>
        </Cell>
        <Cell $w={192}>
          <StatusLine>@  696.11 , 729.29</StatusLine>
          <StatusLine>@  1008.18 &lt; 46.33°</StatusLine>
        </Cell>
        <MouseCell><Mouse /></MouseCell>
        <SelCols>
          <SelCol $w={95} $pl={5} $gap={8}>
            <StatusLine>選取</StatusLine>
            <StatusLine>8</StatusLine>
          </SelCol>
          <SelCol $w={95} $gap={8}>
            <StatusLine>選取線長</StatusLine>
            <StatusLine>411.867</StatusLine>
          </SelCol>
          <SelCol $w={180} $gap={11}>
            <StatusLine>Current Layer</StatusLine>
            <StatusLine>0</StatusLine>
          </SelCol>
        </SelCols>
        <Cell $w={75} $pl={8}>
          <StatusLine>Grid Status</StatusLine>
          <StatusLine>10 / 100</StatusLine>
        </Cell>
      </Status>
    </Win>
  );
}
